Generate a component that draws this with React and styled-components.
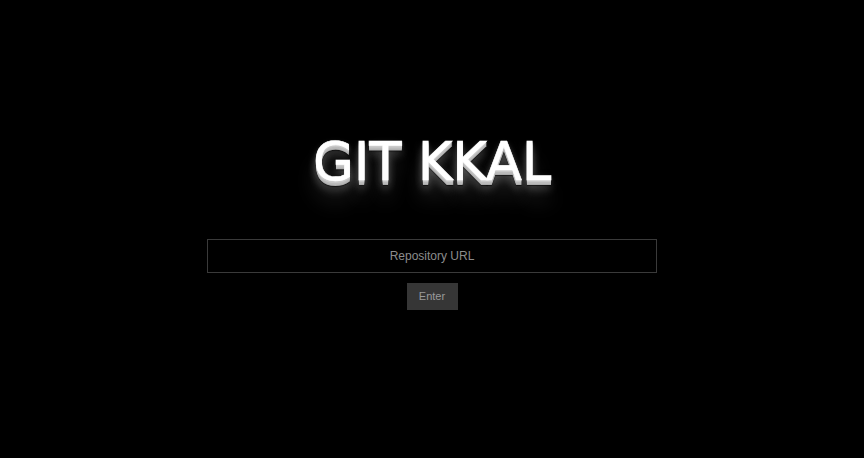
import React from "react";
import styled, { createGlobalStyle } from "styled-components";

const Global = createGlobalStyle`
  html, body { margin: 0; padding: 0; background: #000; }
  body { font-family: "Liberation Sans", Arial, sans-serif; }
`;

const Page = styled.main`
  box-sizing: border-box;
  min-height: 100vh;
  padding-bottom: 17px;
  display: flex;
  flex-direction: column;
  align-items: center;
  justify-content: center;
  background: #000;
`;

const Title = styled.h1`
  margin: 0 0 47px;
  font-family: "DejaVu Sans", Verdana, sans-serif;
  font-weight: normal;
  font-size: 53px;
  line-height: 60px;
  color: #fff;
  letter-spacing: -0.3px;
  -webkit-text-stroke: 0.6px #fff;
  text-shadow:
    0 1px 0 #ccc,
    0 2px 0 #c9c9c9,
    0 3px 0 #bbb,
    0 4px 0 #b9b9b9,
    0 5px 0 #aaa,
    0 6px 1px rgba(0, 0, 0, 0.6),
    0 0 5px rgba(0, 0, 0, 0.6),
    0 1px 3px rgba(255, 255, 255, 0.2),
    0 3px 5px rgba(255, 255, 255, 0.15),
    0 5px 10px rgba(255, 255, 255, 0.25),
    0 10px 10px rgba(255, 255, 255, 0.22),
    0 20px 20px rgba(255, 255, 255, 0.18);
`;

const Form = styled.form`
  display: flex;
  flex-direction: column;
  align-items: center;
  gap: 10px;
`;

const UrlInput = styled.input`
  box-sizing: border-box;
  width: 450px;
  height: 34px;
  background: #000;
  border: 1px solid #3a3a3a;
  color: #ccc;
  text-align: center;
  font-family: "Liberation Sans", Arial, sans-serif;
  font-size: 12px;
  outline: none;
  &::placeholder { color: #8c8c8c; }
`;

const Button = styled.button`
  box-sizing: border-box;
  width: 51px;
  height: 27px;
  background: #363636;
  border: none;
  color: #9a9a9a;
  font-family: "Liberation Sans", Arial, sans-serif;
  font-size: 11px;
  padding: 0;
  cursor: pointer;
`;

export default function App() {
  return (
    <>
      <Global />
      <Page>
        <Title>GIT KKAL</Title>
        <Form onSubmit={(e) => e.preventDefault()}>
          <UrlInput placeholder="Repository URL" />
          <Button type="submit">Enter</Button>
        </Form>
      </Page>
    </>
  );
}
